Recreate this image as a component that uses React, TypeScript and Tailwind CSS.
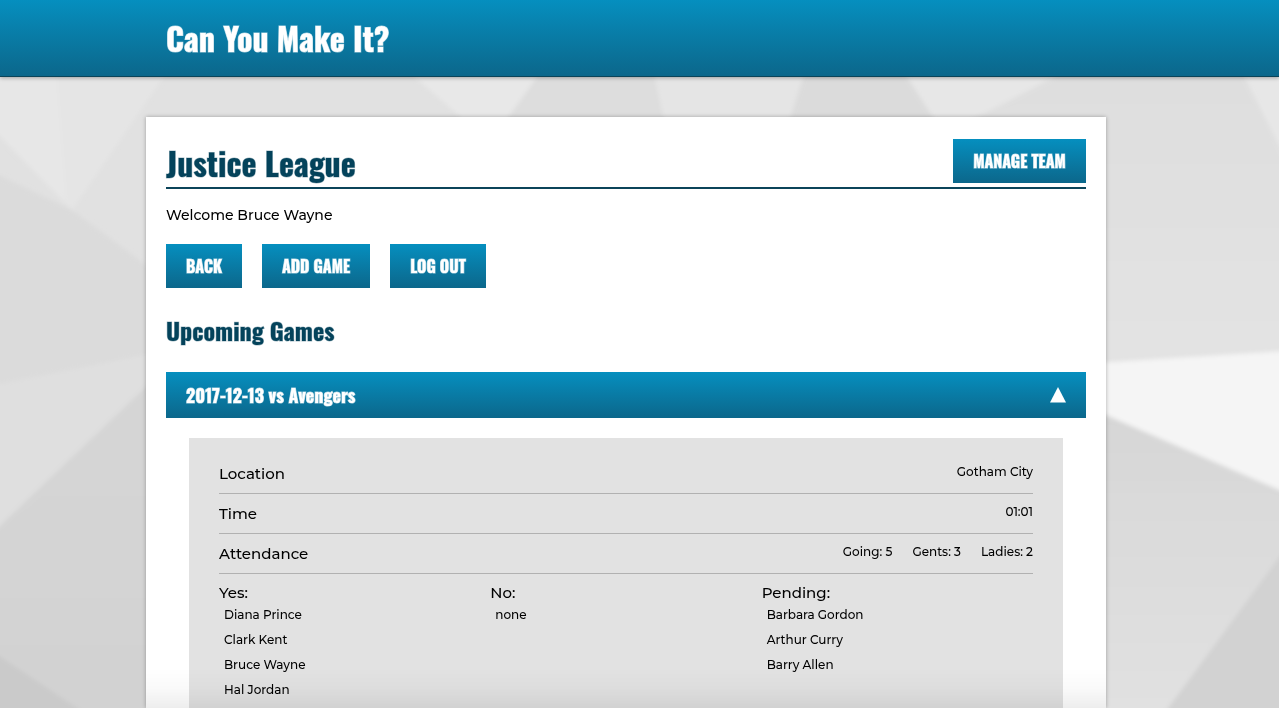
import React, { useState } from "react";

const display = "font-['Oswald','Liberation_Sans_Narrow','Roboto_Condensed',sans-serif] font-bold";
const heavy = "[-webkit-text-stroke:1px_#ffffffa0]";
const heading = "text-[#04435b] [-webkit-text-stroke:1px_#04435b60]";
const bar = "bg-linear-to-b from-[#058fbf] to-[#0b678b] text-white";

function Backdrop() {
  return (
    <svg
      className="fixed inset-0 -z-10 h-full w-full"
      viewBox="0 0 1279 708"
      preserveAspectRatio="none"
      aria-hidden="true"
    >
      <defs>
        <filter id="soft" x="-5%" y="-5%" width="110%" height="110%">
          <feGaussianBlur stdDeviation="2" />
        </filter>
        <linearGradient id="leftDark" x1="0" y1="0" x2="0" y2="1">
          <stop offset="0" stopColor="#d6d6d6" />
          <stop offset="1" stopColor="#d2d2d2" />
        </linearGradient>
        <linearGradient id="rightTop" x1="0" y1="0" x2="0" y2="1">
          <stop offset="0" stopColor="#dedede" />
          <stop offset="1" stopColor="#e3e3e3" />
        </linearGradient>
        <linearGradient id="rightDark" x1="0" y1="0" x2="0" y2="1">
          <stop offset="0" stopColor="#d6d6d6" />
          <stop offset="1" stopColor="#e2e2e2" />
        </linearGradient>
      </defs>
      <rect width="1279" height="708" fill="#e1e1e1" />
      <g filter="url(#soft)">
        <polygon points="-20,50 182,50 72,210 -20,116" fill="#e5e5e5" />
        <polygon points="-20,50 54,50 66,203 -20,116" fill="#e7e7e7" />
        <polygon points="-20,166 72,210 200,305 200,345 -20,388" fill="#dbdbdb" />
        <polygon points="-20,388 200,348 200,345 -20,545" fill="#dfdfdf" />
        <polygon points="-20,545 200,335 200,730 -20,730" fill="url(#leftDark)" />
        <polygon points="-20,643 110,730 -20,730" fill="#cacaca" />
        <polygon points="384,50 556,50 507,120 464,120" fill="#e8e8e8" />
        <polygon points="556,50 649,50 665,125 503,125" fill="#dddddd" />
        <polygon points="649,50 812,50 788,125 665,125" fill="#e5e5e5" />
        <polygon points="812,50 890,50 938,125 788,125" fill="#dbdbdb" />
        <polygon points="890,50 1106,50 962,125 938,125" fill="#e7e7e7" />
        <polygon points="1106,50 1231,50 1300,187 1300,350 1080,364 1080,125 962,125" fill="url(#rightTop)" />
        <polygon points="1231,50 1300,50 1300,187" fill="#e7e7e7" />
        <polygon points="1080,364 1300,350 1300,499 1080,404" fill="#f5f5f5" />
        <polygon points="1080,404 1300,499 1300,730 1080,730" fill="url(#rightDark)" />
        <polygon points="1300,529 1152,730 1300,730" fill="#d2d2d2" />
      </g>
    </svg>
  );
}

function ActionButton({ children, width }: { children: React.ReactNode; width: string }) {
  return (
    <button
      type="button"
      className={`${display} ${heavy} ${bar} ${width} h-11 whitespace-nowrap text-center text-base uppercase`}
    >
      {children}
    </button>
  );
}

function Row({ label, children }: { label: string; children: React.ReactNode }) {
  return (
    <div className="flex h-10 justify-between border-b border-[#b1b1b1]">
      <dt className="text-[15px] leading-10">{label}</dt>
      <dd className="flex gap-5 text-xs leading-9">{children}</dd>
    </div>
  );
}

function Players({ title, names }: { title: string; names: string[] }) {
  return (
    <section>
      <h3 className="text-[15px] leading-[18px]">{title}</h3>
      <ul className="pl-[5px] text-xs leading-[25px]">
        {names.map((name) => (
          <li key={name}>{name}</li>
        ))}
      </ul>
    </section>
  );
}

export default function App() {
  const [open, setOpen] = useState(true);
  return (
    <div className="flex min-h-screen flex-col font-['Montserrat','Inter',sans-serif] font-medium text-black">
      <Backdrop />
      <header className={`${bar} border-b border-[#0b4459] pr-[27px] shadow-[0_1px_4px_rgba(0,0,0,0.3)]`}>
        <div className="mx-auto max-w-[960px] px-5">
          <h1 className={`${display} ${heavy} text-[32px] leading-[76px]`}>Can You Make It?</h1>
        </div>
      </header>
      <div className="flex flex-1 flex-col pt-10 pr-[27px]">
        <main className="mx-auto w-full max-w-[960px] flex-1 bg-white px-5 pt-[22px] shadow-[0_0_4px_rgba(0,0,0,0.3)]">
          <div className="flex h-[50px] items-start justify-between border-b-2 border-[#0b4459]">
            <h2 className={`${display} ${heading} text-[32px] leading-12`}>Justice League</h2>
            <ActionButton width="w-[133px]">Manage Team</ActionButton>
          </div>
          <p className="mt-4 text-sm">Welcome Bruce Wayne</p>
          <nav className="mt-[19px] flex gap-5">
            <ActionButton width="w-[76px]">Back</ActionButton>
            <ActionButton width="w-[108px]">Add Game</ActionButton>
            <ActionButton width="w-24">Log Out</ActionButton>
          </nav>
          <h2 className={`${display} ${heading} mt-6 mb-6 text-2xl leading-9`}>Upcoming Games</h2>
          <button
            type="button"
            aria-expanded={open}
            onClick={() => setOpen(!open)}
            className={`${display} ${heavy} ${bar} flex h-[46px] w-full items-center justify-between px-5 text-lg`}
          >
            2017-12-13 vs Avengers
            <svg width="16" height="16" viewBox="0 0 16 16" fill="currentColor" aria-hidden="true">
              <path d={open ? "M8 0 16 15.5H0Z" : "M8 15.5 0 0h16Z"} />
            </svg>
          </button>
          {open && (
            <div className="mx-[23px] mt-5 min-h-[270px] bg-[#e2e2e2] px-[30px] pt-4">
              <dl>
                <Row label="Location">Gotham City</Row>
                <Row label="Time">01:01</Row>
                <Row label="Attendance">
                  <span>Going: 5</span>
                  <span>Gents: 3</span>
                  <span>Ladies: 2</span>
                </Row>
              </dl>
              <div className="grid grid-cols-3 pt-[10px]">
                <Players title="Yes:" names={["Diana Prince", "Clark Kent", "Bruce Wayne", "Hal Jordan"]} />
                <Players title="No:" names={["none"]} />
                <Players title="Pending:" names={["Barbara Gordon", "Arthur Curry", "Barry Allen"]} />
              </div>
            </div>
          )}
        </main>
      </div>
      <div className="pointer-events-none fixed inset-x-0 bottom-0 pr-[27px]">
        <div className="mx-auto h-10 max-w-[960px] bg-linear-to-b from-transparent via-black/2 to-black/7" />
      </div>
    </div>
  );
}
